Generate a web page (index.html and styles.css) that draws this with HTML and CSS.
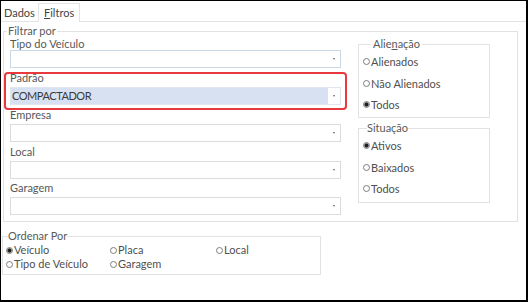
FILE: index.html
```html
<!DOCTYPE html>
<html lang="pt">
<head>
<meta charset="utf-8">
<title>Filtros</title>
<link rel="stylesheet" href="styles.css">
</head>
<body>
<div class="window">
  <div class="tabs">
    <div class="tab tab-dados">Dados</div>
    <div class="tab tab-filtros"><u>F</u>iltros</div>
  </div>
  <div class="page">
    <fieldset class="group filter">
      <legend>Filtrar por</legend>
      <div class="filter-body">
        <div class="fields">
          <div class="field first">
            <label>Tipo do Veículo</label>
            <div class="combo focus"><span class="value"></span><span class="arrow"></span></div>
          </div>
          <div class="field highlight">
            <label>Padrão</label>
            <div class="combo selected"><span class="value">COMPACTADOR</span><span class="arrow"></span></div>
          </div>
          <div class="field">
            <label>Empresa</label>
            <div class="combo"><span class="value"></span><span class="arrow"></span></div>
          </div>
          <div class="field">
            <label>Local</label>
            <div class="combo"><span class="value"></span><span class="arrow"></span></div>
          </div>
          <div class="field last">
            <label>Garagem</label>
            <div class="combo"><span class="value"></span><span class="arrow"></span></div>
          </div>
        </div>
        <div class="options">
          <fieldset class="group opt alien">
            <legend>Alie<u>n</u>ação</legend>
            <div class="radio"><span class="dot"></span>Alienados</div>
            <div class="radio"><span class="dot"></span>Não Alienados</div>
            <div class="radio"><span class="dot on"></span>Todos</div>
          </fieldset>
          <fieldset class="group opt situ">
            <legend>Situação</legend>
            <div class="radio"><span class="dot on"></span>Ativos</div>
            <div class="radio"><span class="dot"></span>Baixados</div>
            <div class="radio"><span class="dot"></span>Todos</div>
          </fieldset>
        </div>
      </div>
    </fieldset>
    <fieldset class="group order">
      <legend>Ordenar Por</legend>
      <div class="order-grid">
        <div class="radio"><span class="dot on"></span>Veículo</div>
        <div class="radio"><span class="dot"></span>Placa</div>
        <div class="radio"><span class="dot"></span>Local</div>
        <div class="radio"><span class="dot"></span>Tipo de Veículo</div>
        <div class="radio"><span class="dot"></span>Garagem</div>
      </div>
    </fieldset>
  </div>
</div>
</body>
</html>
```
FILE: styles.css
```css
* { box-sizing: border-box; }
html, body { margin: 0; padding: 0; background: #fff; }
body {
  font-family: "Lato", "Open Sans", sans-serif;
  font-size: 11px;
  color: #555;
}
u { text-decoration: underline; text-underline-offset: 1px; }

.window {
  width: 528px;
  height: 302px;
  border-style: solid;
  border-color: #000;
  border-width: 1px 2px 2px 1px;
  background: #fff;
  overflow: hidden;
}

/* tabs */
.tabs {
  display: flex;
  align-items: flex-end;
  height: 21px;
  border-bottom: 1px solid #e3e3e3;
}
.tab {
  line-height: 17px;
  padding-bottom: 1px;
  border: 1px solid transparent;
  border-bottom: 0;
  margin-bottom: -1px;
  color: #444;
  white-space: nowrap;
}
.tab-dados { width: 37px; padding-left: 2px; }
.tab-filtros {
  width: 42px;
  padding-left: 5px;
  border-color: #e3e3e3;
  background: #fff;
}

/* group boxes */
.group {
  margin: 0;
  padding: 0;
  min-width: 0;
  border: 1px solid #e2e2e2;
}
.group legend {
  padding: 0;
  line-height: 11px;
  padding-bottom: 2px;
  color: #5a5a5a;
  white-space: nowrap;
}

.filter {
  margin: 3px 0 0 2px;
  width: 515px;
}
.filter > legend { margin-left: 3px; padding-left: 1px; padding-right: 1px; }

.filter-body {
  display: flex;
  gap: 17px;
  padding: 0 27px 0 6px;
}

/* fields */
.fields {
  width: 331px;
  flex: none;
  padding-bottom: 6px;
}
.field label {
  display: block;
  line-height: 19px;
  color: #575757;
}
.field.first label { line-height: 12px; }
.field.last label { line-height: 18px; }

.combo {
  display: flex;
  height: 18px;
  border: 1px solid #dcdcdc;
  background: #fff;
}
.combo.focus { border-color: #cbd8e8; }
.combo.selected { border-color: #e1e5ec; }
.combo .value {
  flex: 1;
  padding-left: 1px;
  line-height: 15px;
  color: #3a3a3a;
}
.combo.selected .value {
  background: #d7e1f1;
  letter-spacing: -0.45px;
}
.combo .arrow {
  width: 12px;
  flex: none;
  display: flex;
  align-items: center;
  justify-content: center;
  background: #fff;
}
.combo .arrow::before {
  content: "";
  border-left: 1.5px solid transparent;
  border-right: 1.5px solid transparent;
  border-top: 2px solid #666;
}

.field.highlight { position: relative; }
.field.highlight::after {
  content: "";
  position: absolute;
  top: 4px;
  left: -6px;
  right: -6px;
  bottom: -5px;
  border: 2px solid #e8393c;
  border-radius: 4px;
  pointer-events: none;
}

/* option boxes */
.options {
  width: 132px;
  flex: none;
  display: flex;
  flex-direction: column;
}
.opt { padding: 0 0 0 4px; }
.alien { padding-bottom: 1.5px; }
.alien > legend { margin-left: 8px; padding-left: 2px; padding-right: 2px; }
.situ { margin-top: 4px; padding-bottom: 2px; }
.situ > legend { margin-left: 4px; }

.radio {
  display: flex;
  align-items: center;
  line-height: 21.5px;
  color: #4f4f4f;
  white-space: nowrap;
}
.dot {
  width: 7px;
  height: 7px;
  flex: none;
  border: 1px solid #7d7d7d;
  border-radius: 50%;
  margin-right: 1px;
  background: #fff;
}
.dot.on {
  background: radial-gradient(circle, #1e1e1e 0 1.6px, #6a6a6a 2px, #fff 2.6px);
}

/* order */
.order {
  margin: 8px 0 0 1px;
  width: 319px;
}
.order > legend { margin-left: 5px; }
.order-grid {
  display: grid;
  grid-template-columns: 104px 106px 1fr;
  padding: 0 0 3px 3px;
}
.order-grid .radio { line-height: 14px; }
```
